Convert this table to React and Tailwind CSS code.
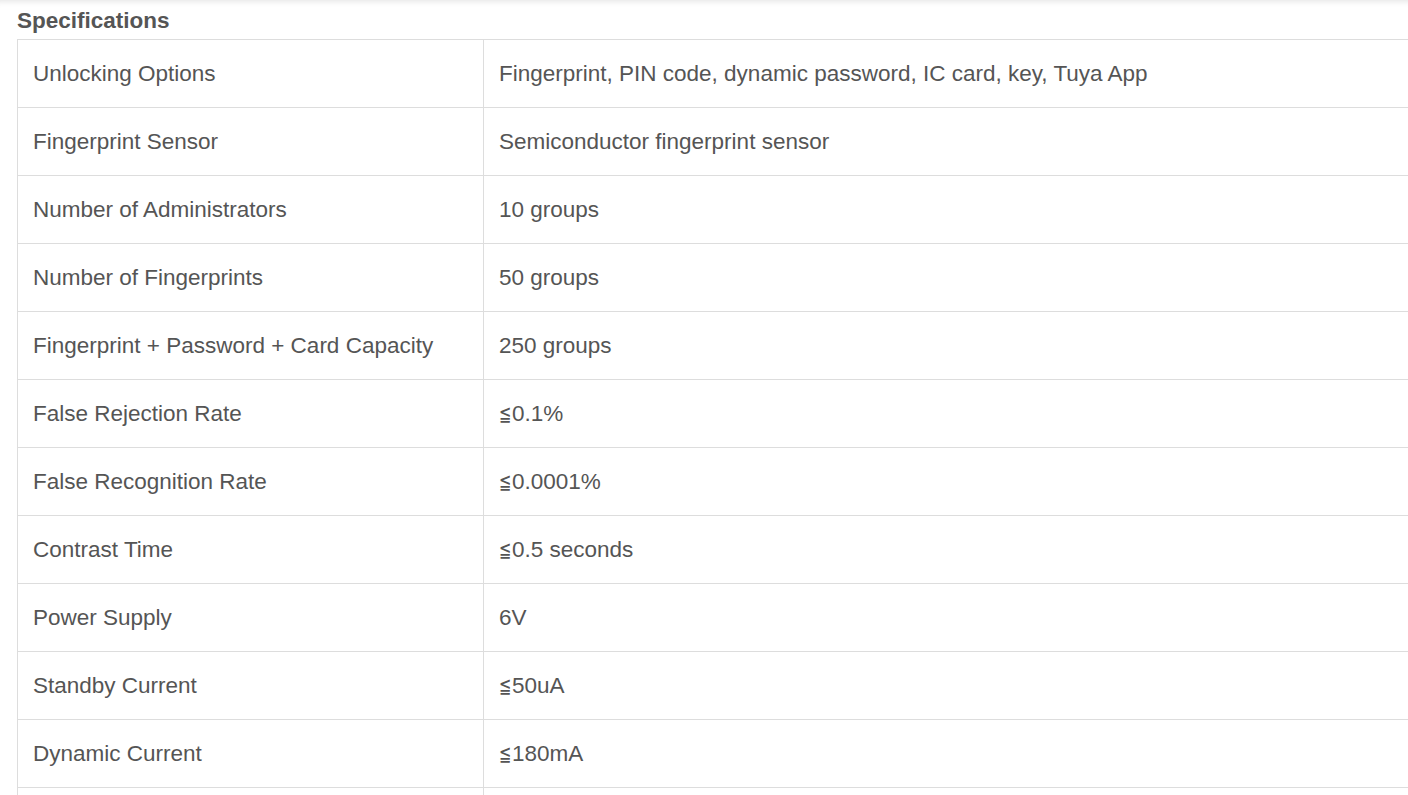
const specs = [
  ["Unlocking Options", "Fingerprint, PIN code, dynamic password, IC card, key, Tuya App"],
  ["Fingerprint Sensor", "Semiconductor fingerprint sensor"],
  ["Number of Administrators", "10 groups"],
  ["Number of Fingerprints", "50 groups"],
  ["Fingerprint + Password + Card Capacity", "250 groups"],
  ["False Rejection Rate", "≦0.1%"],
  ["False Recognition Rate", "≦0.0001%"],
  ["Contrast Time", "≦0.5 seconds"],
  ["Power Supply", "6V"],
  ["Standby Current", "≦50uA"],
  ["Dynamic Current", "≦180mA"],
  ["", ""],
];

// the ≦ sign is drawn thin and narrow in the reference
function Value({ text }) {
  if (!text.startsWith("≦")) return text;
  return (
    <>
      <span
        className="inline-block w-[13px] text-[21px] leading-none font-extralight origin-left scale-x-[0.7]"
        style={{ fontFamily: '"DejaVu Sans", sans-serif' }}
      >
        ≦
      </span>
      {text.slice(1)}
    </>
  );
}

export default function App() {
  return (
    <div
      className="h-[795px] overflow-hidden bg-white text-[#555] shadow-[inset_0_7px_6px_-6px_rgba(0,0,0,0.12)]"
      style={{ fontFamily: '"Liberation Sans", Arial, sans-serif' }}
    >
      <div className="pl-[17px]">
        {/* Heading */}
        <h2 className="pt-[6px] mb-[3px] text-[22.5px] leading-[30px] font-bold">Specifications</h2>

        {/* Spec table */}
        <table className="w-[1420px] border-collapse text-[22.5px]">
          <tbody>
            {specs.map(([label, value], i) => (
              <tr key={i} className="h-[68px]">
                <td className="w-[466px] border border-[#ddd] px-[15px] align-middle">{label}</td>
                <td className="border border-[#ddd] px-[15px] align-middle">
                  <Value text={value} />
                </td>
              </tr>
            ))}
          </tbody>
        </table>
      </div>
    </div>
  );
}
